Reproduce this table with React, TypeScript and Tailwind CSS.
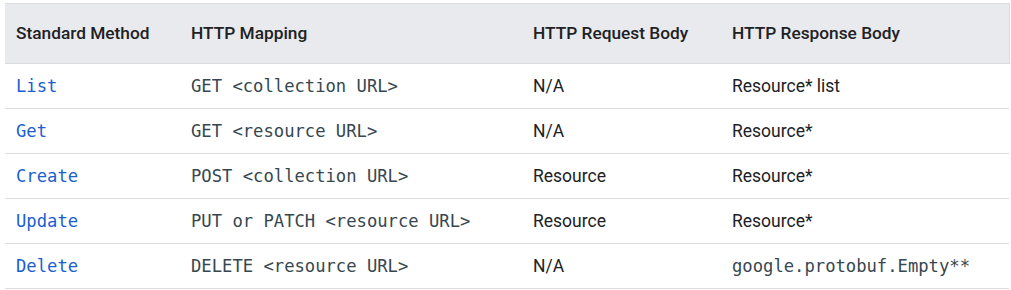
const rows = [
  { method: "List", mapping: "GET <collection URL>", req: "N/A", res: "Resource* list", resCode: false },
  { method: "Get", mapping: "GET <resource URL>", req: "N/A", res: "Resource*", resCode: false },
  { method: "Create", mapping: "POST <collection URL>", req: "Resource", res: "Resource*", resCode: false },
  { method: "Update", mapping: "PUT or PATCH <resource URL>", req: "Resource", res: "Resource*", resCode: false },
  { method: "Delete", mapping: "DELETE <resource URL>", req: "N/A", res: "google.protobuf.Empty**", resCode: true },
];

const monoFont = "font-['DejaVu_Sans_Mono',monospace] text-[17.2px]";

const App = () => {
  return (
    <div className="w-[1011px] h-[290px] bg-white pt-[3px] pl-[5px] font-['Roboto',sans-serif] text-[17.5px] text-[#202124]">
      <table className="w-[1004px] table-fixed border-collapse">
        <colgroup>
          <col className="w-[174px]" />
          <col className="w-[342px]" />
          <col className="w-[199px]" />
          <col className="w-[289px]" />
        </colgroup>
        <thead>
          <tr className="h-[60px] bg-[#e8eaed] border-t border-b border-r border-[#dadce0]">
            <th className="text-left font-medium text-[17.3px] px-[11px]">Standard Method</th>
            <th className="text-left font-medium text-[17.3px] px-[12px]">HTTP Mapping</th>
            <th className="text-left font-medium text-[17.3px] px-[12px]">HTTP Request Body</th>
            <th className="text-left font-medium text-[17.3px] px-[12px]">HTTP Response Body</th>
          </tr>
        </thead>
        <tbody>
          {rows.map((r) => (
            <tr key={r.method} className="h-[45px] border-b border-[#dadce0]">
              <td className="px-[11px]">
                <span className={`${monoFont} text-[#1a5fd0]`}>{r.method}</span>
              </td>
              <td className="px-[12px]">
                <span className={`${monoFont} text-[#37474f]`}>{r.mapping}</span>
              </td>
              <td className="px-[12px]">{r.req}</td>
              <td className="px-[12px]">
                {r.resCode ? (
                  <span className={`${monoFont} text-[#37474f]`}>{r.res}</span>
                ) : (
                  r.res
                )}
              </td>
            </tr>
          ))}
        </tbody>
      </table>
    </div>
  );
};

export default App;
